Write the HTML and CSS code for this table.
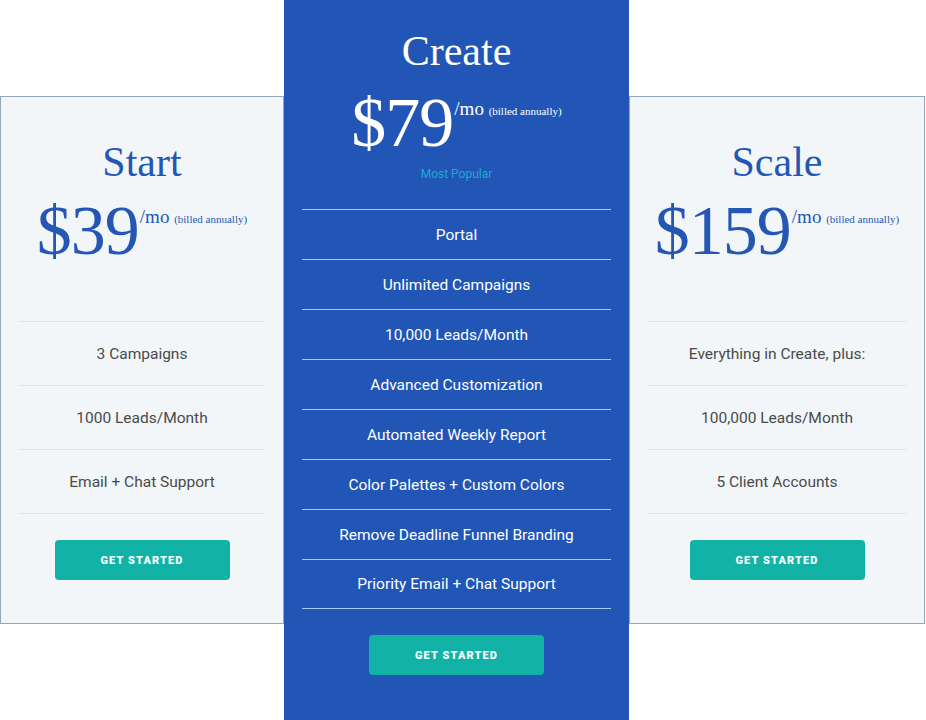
FILE: index.html
```html
<!DOCTYPE html>
<html>
<head>
<meta charset="utf-8">
<link rel="stylesheet" href="styles.css">
</head>
<body>
<div class="pricing">
  <div class="card side">
    <h2 class="title">Start</h2>
    <div class="price"><span class="amount">$39</span><span class="suffix">/mo <small>(billed annually)</small></span></div>
    <ul class="features">
      <li>3 Campaigns</li>
      <li>1000 Leads/Month</li>
      <li>Email + Chat Support</li>
    </ul>
    <a class="btn" href="#">GET STARTED</a>
  </div>
  <div class="card featured">
    <h2 class="title">Create</h2>
    <div class="price"><span class="amount">$79</span><span class="suffix">/mo <small>(billed annually)</small></span></div>
    <div class="popular">Most Popular</div>
    <ul class="features">
      <li>Portal</li>
      <li>Unlimited Campaigns</li>
      <li>10,000 Leads/Month</li>
      <li>Advanced Customization</li>
      <li>Automated Weekly Report</li>
      <li>Color Palettes + Custom Colors</li>
      <li>Remove Deadline Funnel Branding</li>
      <li>Priority Email + Chat Support</li>
    </ul>
    <a class="btn" href="#">GET STARTED</a>
  </div>
  <div class="card side right">
    <h2 class="title">Scale</h2>
    <div class="price"><span class="amount">$159</span><span class="suffix">/mo <small>(billed annually)</small></span></div>
    <ul class="features">
      <li>Everything in Create, plus:</li>
      <li>100,000 Leads/Month</li>
      <li>5 Client Accounts</li>
    </ul>
    <a class="btn" href="#">GET STARTED</a>
  </div>
</div>
</body>
</html>
```
FILE: styles.css
```css
* { box-sizing: border-box; }
html, body { margin: 0; padding: 0; background: #ffffff; }
body { font-family: Roboto, "Liberation Sans", sans-serif; overflow: hidden; }

.pricing {
  display: flex;
  align-items: center;
  height: 720px;
  width: 926px;
}

.card {
  display: flex;
  flex-direction: column;
  align-items: stretch;
  padding-left: 18px;
  padding-right: 18px;
}

.side {
  width: 284px;
  height: 528px;
  background: #f2f6f9;
  border: 1px solid #93a6c4;
  padding-top: 44px;
  color: #2457b4;
}
.side.right { width: 296px; }

.featured {
  width: 345px;
  height: 720px;
  background: #2155b6;
  padding-top: 30px;
  color: #ffffff;
}

.title {
  margin: 0;
  font-family: "Liberation Serif", serif;
  font-weight: 400;
  font-size: 42px;
  line-height: 1;
  text-align: center;
}

.price {
  display: flex;
  justify-content: center;
  align-items: flex-start;
  font-family: "Liberation Serif", serif;
  margin-top: 13px;
}
.featured .price { margin-top: 16px; }

.amount {
  font-size: 70px;
  line-height: 1;
  letter-spacing: -1px;
}
.suffix {
  font-size: 19px;
  line-height: 1;
  margin-top: 11px;
  margin-left: 1px;
  white-space: nowrap;
}
.suffix small { font-size: 11px; }

.popular {
  margin-top: 9px;
  font-size: 12px;
  line-height: 14px;
  text-align: center;
  color: #1eaacf;
}

.features {
  list-style: none;
  margin: 55px 0 0;
  padding: 0;
}
.features li {
  height: 64px;
  display: flex;
  align-items: center;
  justify-content: center;
  border-top: 1px solid #dfe5eb;
  font-size: 15.5px;
  color: #4a4a4a;
}
.features li:last-child { border-bottom: 1px solid #dfe5eb; height: 65px; }

.featured .features { margin-top: 28px; }
.featured .features li {
  height: 50px;
  color: #ffffff;
  border-top-color: #a9c9f4;
}
.featured .features li:last-child { height: 50px; border-bottom-color: #a9c9f4; }

.btn {
  align-self: center;
  width: 175px;
  height: 40px;
  margin-top: 26px;
  display: flex;
  align-items: center;
  justify-content: center;
  background: #13b2a6;
  border-radius: 4px;
  color: #f4ffff;
  font-family: Roboto, "Liberation Sans", sans-serif;
  font-size: 11px;
  font-weight: 900;
  letter-spacing: 1.1px;
  text-decoration: none;
}
```
